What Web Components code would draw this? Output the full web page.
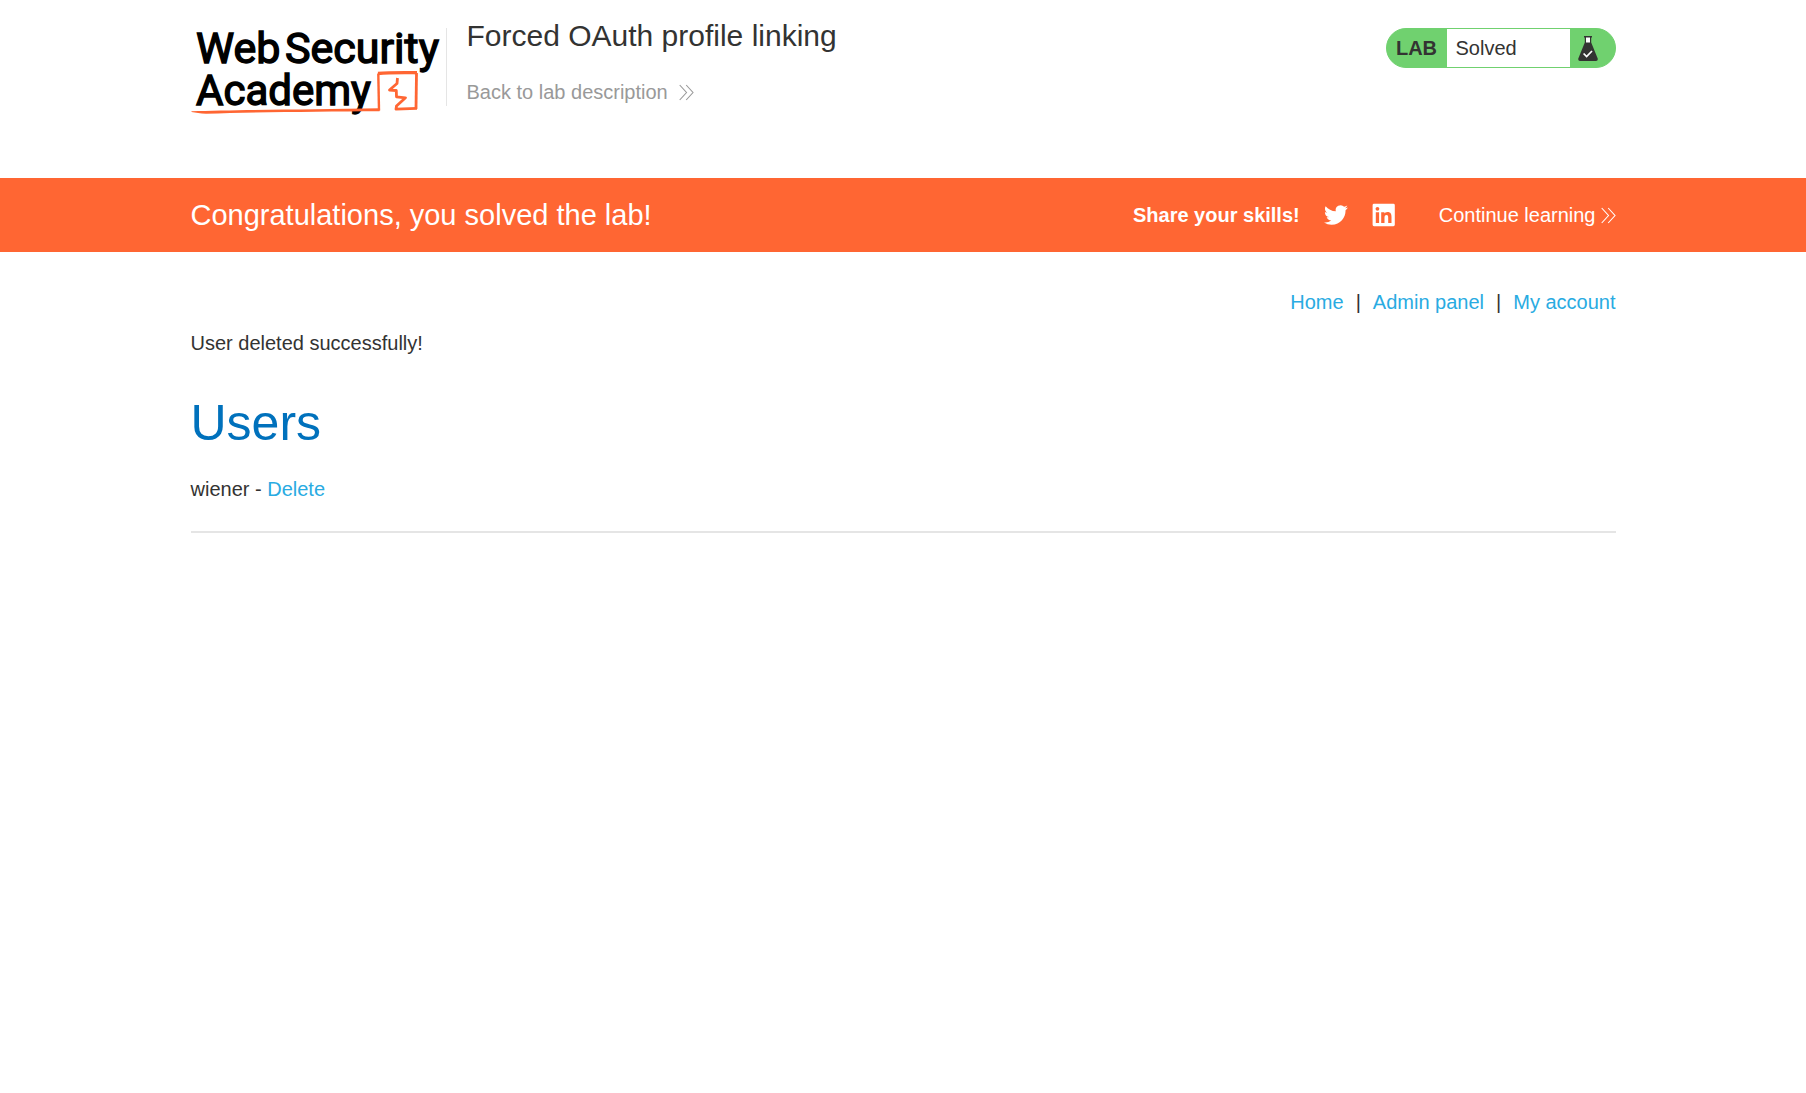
<!DOCTYPE html>
<html lang="en">
<head>
<meta charset="utf-8">
<title>Forced OAuth profile linking</title>
<style>
  body { margin: 0; background: #fff; color: #333332; font: 20px/24px "Liberation Sans", Arial, sans-serif; }
</style>
</head>
<body>
<lab-page></lab-page>
<script>
const box = 'box-sizing: border-box; max-width: 1425px; margin: 0 auto;';
function define(name, html) {
  const template = document.createElement('template');
  template.innerHTML = html;
  customElements.define(name, class extends HTMLElement {
    constructor() {
      super();
      this.attachShadow({ mode: 'open' }).append(template.content.cloneNode(true));
    }
  });
}

define('double-chevron', `
<style>:host { display: inline-flex; } svg { display: block; }</style>
<svg width="15" height="17" viewBox="0 0 15 17" fill="none" stroke="currentColor" stroke-width="1.1" aria-hidden="true"><path d="M.7 1 7.5 8.5.7 16M7.2 1 14 8.5 7.2 16"/></svg>`);

define('academy-logo', `
<style>
  :host { display: block; }
  a, svg { display: block; }
  svg { overflow: visible; }
  text { font-family: Roboto, sans-serif; font-size: 43px; fill: #000; stroke: #000; stroke-width: 1.4; }
  .second { font-size: 42px; }
</style>
<a href="#" aria-label="Web Security Academy">
<svg width="255" height="90" viewBox="191 26 255 90">
  <text x="196" y="63">Web</text><text x="285" y="63">Security</text><text class="second" x="196" y="105">Academy</text>
  <g fill="none" stroke="#ff6633" stroke-linejoin="round">
    <path d="M379 110.500 378.300 73.500" stroke-width="2.400"/>
    <path d="M378 73.500C390 72.300 405 72.600 417 72.700" stroke-width="3.400"/>
    <path d="M416.500 73 416 109" stroke-width="2.800"/>
    <path d="M417 108.300 396 109.200 396.500 106 405.500 97.800 396.500 96.800 396.300 90.500 389.500 90 397 83.500 397.500 78" stroke-width="2.800"/>
  </g>
  <path fill="#ff6633" d="M191.500 111.300C235 109.800 310 109.700 380 108.300L379.500 111.200C320 111.600 255 112 206 113.800 200 113.600 196 112.800 191.500 112Z"/>
</svg></a>`);

define('lab-status', `
<style>
  :host { display: flex; width: 230px; height: 40px; box-sizing: border-box; border: 1px solid #70d16f; border-radius: 20px; background: #70d16f; overflow: hidden; line-height: 38px; }
  b { width: 60px; text-align: center; }
  p { margin: 0; width: 123px; padding-left: 9px; box-sizing: border-box; background: #fff; }
  svg { margin: 7px 0 0 8px; }
</style>
<b>LAB</b><p><slot></slot></p>
<svg width="20" height="25" viewBox="0 0 20 25" aria-hidden="true">
  <path fill="#333332" d="M6 0h8v1.500h-.8v5L19.700 22.500Q20.200 25 18 25H2Q-.2 25 .3 22.500L6.800 6.500v-5H6Z"/>
  <path fill="#fff" d="M8 1.500h4v5H8Z"/><path fill="none" stroke="#fff" stroke-width="1.700" d="m5.600 17.500 3 3L14 15"/>
</svg>`);

define('lab-header', `
<style>
  :host { display: block; }
  .inner { ${box} height: 178px; padding-top: 26px; display: flex; align-items: flex-start; }
  .title { flex: 1; display: flex; flex-direction: column; align-items: flex-start; margin: 2px 0 0; padding-left: 20px; border-left: 1px solid #e5e5e5; height: 78px; }
  h1 { font-size: 30px; line-height: 36px; font-weight: 400; margin: -10px 0 0; }
  .back { margin-top: 26px; color: #999; text-decoration: none; display: flex; align-items: center; gap: 11px; }
  lab-status { margin-top: 2px; }
</style>
<div class="inner">
  <academy-logo></academy-logo>
  <div class="title"><h1>Forced OAuth profile linking</h1><a class="back" href="#">Back to lab description<double-chevron></double-chevron></a></div>
  <lab-status>Solved</lab-status>
</div>`);

define('solved-banner', `
<style>
  :host { display: block; background: #ff6633; color: #fff; }
  .inner { ${box} height: 74px; display: flex; align-items: center; justify-content: space-between; }
  h2 { margin: 0; font-size: 29px; line-height: 34px; font-weight: 400; }
  .share { display: flex; align-items: center; }
  a { color: inherit; text-decoration: none; display: flex; align-items: center; }
  svg { display: block; }
  .tw, .in { margin-left: 24px; }
  .next { margin-left: 43px; gap: 5px; }
</style>
<div class="inner">
  <h2>Congratulations, you solved the lab!</h2>
  <div class="share">
    <b>Share your skills!</b>
    <a class="tw" href="#" aria-label="Share on Twitter"><svg width="24" height="24" viewBox="0 0 24 24" fill="currentColor"><path d="M23.950 4.570a10 10 0 0 1-2.820.770 4.960 4.960 0 0 0 2.160-2.720c-.950.550-2 .950-3.130 1.180a4.920 4.920 0 0 0-8.380 4.480C7.690 8.090 4.070 6.130 1.640 3.160a4.820 4.820 0 0 0-.670 2.480c0 1.710.870 3.210 2.190 4.100a4.900 4.900 0 0 1-2.230-.620v.060a4.920 4.920 0 0 0 3.950 4.830 5 5 0 0 1-2.210.080 4.940 4.940 0 0 0 4.600 3.420A9.870 9.870 0 0 1 0 19.540a14 14 0 0 0 7.550 2.210c9.050 0 14-7.500 14-13.980 0-.210 0-.420-.020-.630a9.940 9.940 0 0 0 2.420-2.570Z"/></svg></a>
    <a class="in" href="#" aria-label="Share on LinkedIn"><svg width="24" height="24" viewBox="0 0 24 24" fill="currentColor"><path fill-rule="evenodd" d="M2 .800h19.400a1.400 1.400 0 0 1 1.400 1.400v19.600a1.400 1.400 0 0 1-1.400 1.400H2A1.400 1.400 0 0 1 .600 21.800V2.200A1.400 1.400 0 0 1 2 .800ZM3.800 9.200h3.300v10.700H3.800ZM5.450 3.900a1.900 1.900 0 1 0 0 3.800 1.900 1.900 0 0 0 0-3.800ZM9.200 9.200v10.700h3.300v-5.300c0-1.400.300-2.700 2-2.700 1.700 0 1.700 1.600 1.700 2.800v5.200h3.300V14c0-2.900-.600-5.100-4-5.100-1.600 0-2.700.900-3.100 1.700V9.200Z"/></svg></a>
    <a class="next" href="#">Continue learning<double-chevron></double-chevron></a>
  </div>
</div>`);

define('user-list', `
<style>
  :host { display: block; }
  .inner { ${box} padding-top: 38px; }
  a { color: #29abe2; text-decoration: none; }
  nav { display: flex; justify-content: flex-end; gap: 12px; }
  p { margin: 0; }
  .notice { margin-top: 17px; }
  h1 { margin: 38px 0 0; font-size: 50px; line-height: 60px; font-weight: 400; color: #0071bc; }
  .user { margin-top: 24px; }
  hr { height: 2px; border: 0; margin: 30px 0 0; background: #e5e5e5; }
</style>
<main class="inner">
  <nav><a href="#">Home</a><span>|</span><a href="#">Admin panel</a><span>|</span><a href="#">My account</a></nav>
  <p class="notice">User deleted successfully!</p>
  <h1>Users</h1>
  <p class="user">wiener - <a href="#">Delete</a></p>
  <hr>
</main>`);

define('lab-page', `
<style>:host { display: block; }</style>
<lab-header></lab-header><solved-banner></solved-banner><user-list></user-list>`);
</script>
</body>
</html>
